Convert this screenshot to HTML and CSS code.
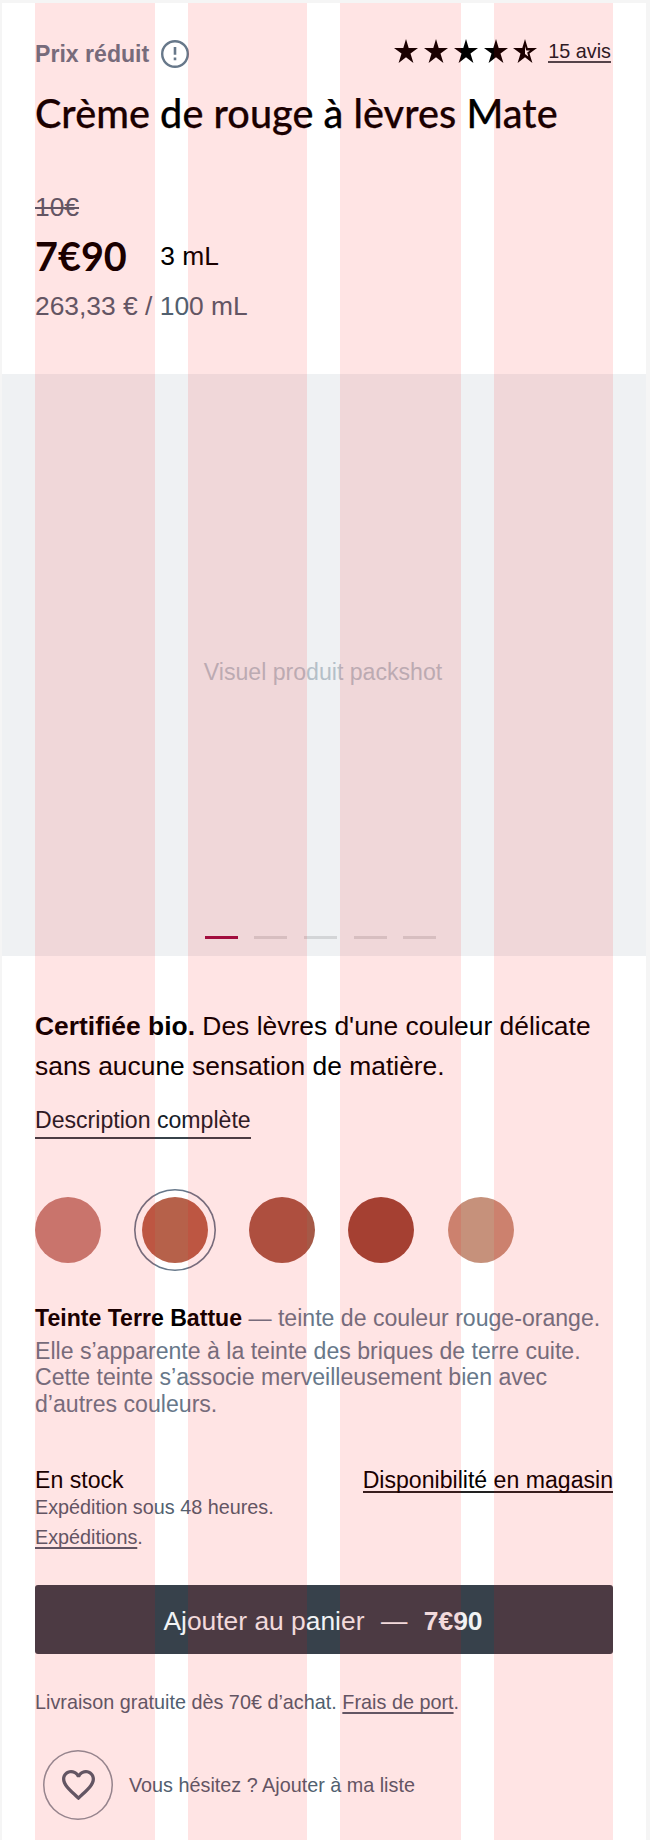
FILE: index.html
```html
<!DOCTYPE html>
<html lang="fr">
<head>
<meta charset="utf-8">
<title>Crème de rouge à lèvres Mate</title>
<link rel="stylesheet" href="styles.css">
</head>
<body>
<svg class="defs" aria-hidden="true"><defs>
  <path id="star" d="M12 0 L14.7 9 L24 9.1 L16.5 14.6 L19.4 24 L12 18.2 L4.6 24 L7.5 14.6 L0 9.1 L9.3 9 Z"/>
</defs></svg>
<main class="product">
  <section class="summary">
    <div class="topline">
      <div class="promo">
        <span>Prix réduit</span>
        <svg class="info" viewBox="0 0 28 28"><circle cx="14" cy="14" r="12.8" fill="none" stroke="currentColor" stroke-width="2.4"/><path d="M14 6.9v7.9M14 17.6v2.7" stroke="currentColor" stroke-width="2.6"/></svg>
      </div>
      <div class="rating">
        <div class="stars">
          <svg viewBox="0 0 24 24"><use href="#star"/></svg>
          <svg viewBox="0 0 24 24"><use href="#star"/></svg>
          <svg viewBox="0 0 24 24"><use href="#star"/></svg>
          <svg viewBox="0 0 24 24"><use href="#star"/></svg>
          <svg viewBox="0 0 24 24"><use href="#star"/><path fill="#fff" d="M12 7.2L13.3 11.4H17L14.2 13.4L15.3 17.4L12 14.9Z"/></svg>
        </div>
        <a class="reviews">15 avis</a>
      </div>
    </div>
    <h1 class="title">Crème de rouge à lèvres Mate</h1>
    <div class="old-price">10€</div>
    <div class="price-row"><span class="price">7€90</span><span class="volume">3 mL</span></div>
    <div class="unit-price">263,33 € / 100 mL</div>
  </section>

  <section class="gallery">
    <span class="gallery-label">Visuel produit packshot</span>
    <div class="pager"><i class="page current"></i><i class="page"></i><i class="page"></i><i class="page"></i><i class="page"></i></div>
  </section>

  <section class="details">
    <p class="lead"><b>Certifiée bio.</b> Des lèvres d'une couleur délicate sans aucune sensation de matière.</p>
    <a class="more">Description complète</a>
    <div class="swatches">
      <span class="swatch rose"></span>
      <span class="ring"><span class="swatch terre"></span></span>
      <span class="swatch brique"></span>
      <span class="swatch rouge"></span>
      <span class="swatch nude"></span>
    </div>
    <p class="shade"><b>Teinte Terre Battue</b> — teinte de couleur rouge-orange.</p>
    <p class="shade-text">Elle s’apparente à la teinte des briques de terre cuite.<br>Cette teinte s’associe merveilleusement bien avec<br>d’autres couleurs.</p>
    <div class="stock"><span>En stock</span><a class="store">Disponibilité en magasin</a></div>
    <p class="shipping">Expédition sous 48 heures.<br><a class="link">Expéditions</a>.</p>
    <button class="buy"><span>Ajouter au panier</span><span>—</span><b>7€90</b></button>
    <p class="delivery">Livraison gratuite dès 70€ d’achat. <a class="link">Frais de port</a>.</p>
    <div class="wish">
      <span class="wish-button"><svg viewBox="2 3 20 18.35"><path fill="currentColor" d="M16.5 3c-1.74 0-3.41.81-4.5 2.09C10.91 3.81 9.24 3 7.5 3 4.42 3 2 5.42 2 8.5c0 3.78 3.4 6.86 8.55 11.54L12 21.35l1.45-1.32C18.6 15.36 22 12.28 22 8.5 22 5.42 19.58 3 16.5 3zm-4.4 15.55l-.1.1-.1-.1C7.14 14.24 4 11.39 4 8.5 4 6.5 5.5 5 7.5 5c1.54 0 3.04.99 3.57 2.36h1.87C13.46 5.99 14.96 5 16.5 5c2 0 3.5 1.5 3.5 3.5 0 2.89-3.14 5.74-7.9 10.05z"/></svg></span>
      <span>Vous hésitez ? Ajouter à ma liste</span>
    </div>
  </section>
  <div class="columns"><i></i><i></i><i></i><i></i></div>
</main>
</body>
</html>
```
FILE: styles.css
```css
* { box-sizing: border-box; }
body {
  margin: 0;
  padding: 3px 4px 0 2px;
  background: #f5f5f5;
  font-family: "Liberation Sans", Arial, sans-serif;
  font-size: 23.1px;
  line-height: 26.4px;
  color: #000;
}
p, h1 { margin: 0; }
.defs { position: absolute; width: 0; height: 0; }
.product { position: relative; height: 1837px; background: #fff; overflow: hidden; }
.summary { height: 371px; padding: 36px 33px 0; }
.topline { display: flex; justify-content: space-between; align-items: flex-start; height: 29px; }
.promo { display: flex; align-items: center; gap: 12px; padding-top: 1px; line-height: 28px; font-weight: 700; color: #67788a; }
.info { width: 28px; height: 28px; color: #67788a; }
.rating { display: flex; gap: 11px; padding-right: 2px; }
.stars { display: flex; gap: 5.8px; }
.stars svg { width: 24px; height: 24px; }
.reviews {
  height: 24px;
  font-size: 19.8px;
  line-height: 24px;
  color: #142029;
  box-shadow: 0 -2px 0 #414b52 inset;
}
.title {
  margin-top: 21.2px;
  font: 500 39.6px/48px Lato, sans-serif;
  letter-spacing: .07px;
  white-space: nowrap;
  -webkit-text-stroke: .25px #000;
}
.old-price { margin-top: 54.1px; font-size: 26.4px; line-height: 32px; color: #51606f; text-decoration: line-through; }
.price-row { display: flex; gap: 33.4px; margin-top: 8.4px; line-height: 48px; }
.price { font-family: Lato, sans-serif; font-size: 39.6px; font-weight: 700; }
.volume { padding-top: .6px; height: 48px; font-size: 26.4px; }
.unit-price { margin-top: 10.1px; font-size: 26.4px; line-height: 32px; color: #51606f; }

.gallery {
  display: flex;
  flex-direction: column;
  align-items: center;
  height: 582px;
  padding-top: 285px;
  background: #eff1f3;
}
.gallery-label { margin-right: 2px; color: #b4bfc8; }
.pager { display: flex; gap: 16.6px; margin: 250.6px 0 0 -7px; }
.page { width: 33px; height: 3px; background: #d3d5d7; }
.current { background: #970f46; }

.details { padding: 51px 33px 0; }
.lead { font-size: 26.4px; line-height: 39.6px; letter-spacing: .01px; }
.more {
  display: block;
  width: max-content;
  margin-top: 20.6px;
  padding-bottom: 4px;
  color: #142029;
  border-bottom: 2px solid #37424a;
}
.swatches { display: flex; align-items: center; gap: 33.15px; height: 82px; margin-top: 50px; }
.swatch { width: 66px; height: 66px; border-radius: 50%; }
.ring { display: flex; align-items: center; justify-content: center; width: 82px; height: 82px; box-shadow: inset 0 0 0 1.6px #67788a; border-radius: 50%; }
.rose { background: #c38279; }
.terre { background: #b6614a; }
.brique { background: #a55947; }
.rouge { background: #9b4839; }
.nude { background: #c6917b; }
.shade { margin-top: 33.8px; color: #67788a; white-space: nowrap; }
.shade b { color: #000; }
.shade-text { margin-top: 6.6px; color: #67788a; white-space: nowrap; }
.stock { display: flex; justify-content: space-between; height: 26.4px; margin-top: 49.8px; }
.store { height: 26px; border-bottom: 2px solid #222; }
.shipping { margin-top: -1px; font-size: 19.8px; line-height: 30px; color: #51606f; }
.link { text-decoration: underline; text-decoration-thickness: 1.5px; text-underline-offset: 3px; text-decoration-skip-ink: none; }
.buy {
  display: flex;
  align-items: center;
  justify-content: center;
  gap: 16.5px;
  width: 578px;
  height: 69px;
  margin-top: 33px;
  padding: 2px 2px 0 0;
  border: 0;
  border-radius: 3px;
  background: #37414b;
  color: #f1f3f5;
  font: 26.4px/32px "Liberation Sans", Arial, sans-serif;
}
.delivery { margin-top: 35px; font-size: 19.8px; line-height: 26px; letter-spacing: .015px; color: #51606f; }
.wish { display: flex; align-items: center; gap: 16px; height: 70px; margin: 35px 0 0 8px; font-size: 19.8px; color: #51606f; }
.wish-button { display: flex; align-items: center; justify-content: center; width: 70px; height: 70px; padding-bottom: 1px; box-shadow: inset 0 0 0 1.5px #8a949e; border-radius: 50%; }
.wish-button svg { width: 33px; height: 30.3px; }

/* Translucent layout grid laid over the whole screen */
.columns {
  position: absolute;
  inset: 0;
  display: grid;
  grid-template-columns: 120px 119px 121px 119px;
  gap: 33px;
  padding: 0 33px;
  pointer-events: none;
}
.columns i { background: rgba(255, 0, 0, .106); }
```
